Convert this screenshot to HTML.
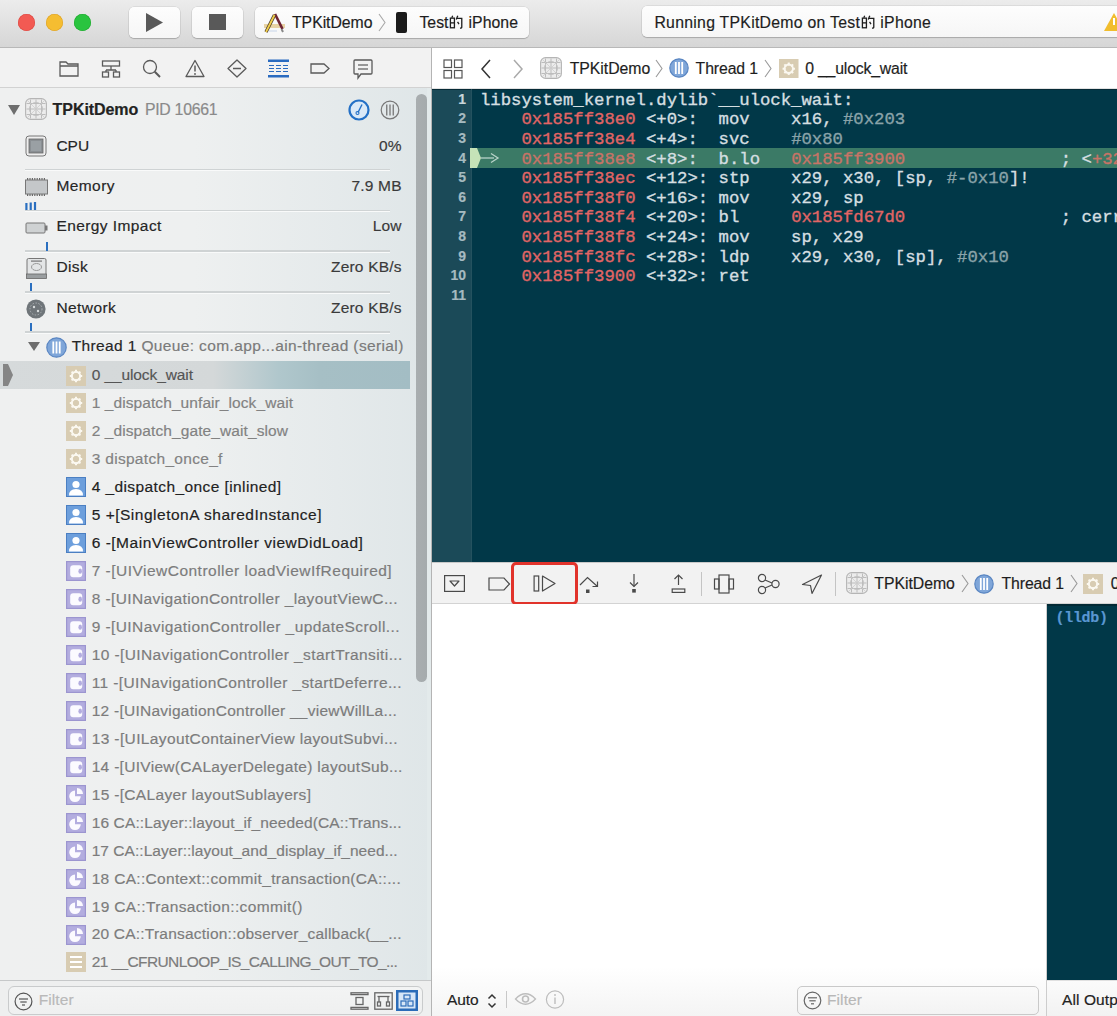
<!DOCTYPE html><html><head><meta charset="utf-8"><style>
*{box-sizing:border-box;margin:0;padding:0}
html,body{width:1117px;height:1016px;overflow:hidden;background:#fff;font-family:"Liberation Sans",sans-serif}
.b{position:absolute}
.t{position:absolute;white-space:nowrap;line-height:1;-webkit-text-stroke:0.18px currentColor}
</style></head><body>
<div class="b" style="left:0px;top:0px;width:1117px;height:48px;background:linear-gradient(#ececec,#d6d6d6);border-bottom:1px solid #b8b8b8"></div>
<div class="b" style="left:17.55px;top:13.5px;width:17.5px;height:17.5px;border-radius:50%;background:#f25a53;box-shadow:inset 0 0 0 0.6px #dc4a43"></div>
<div class="b" style="left:45.85px;top:13.5px;width:17.5px;height:17.5px;border-radius:50%;background:#f5bd31;box-shadow:inset 0 0 0 0.6px #dca22a"></div>
<div class="b" style="left:73.65px;top:13.5px;width:17.5px;height:17.5px;border-radius:50%;background:#2ac43f;box-shadow:inset 0 0 0 0.6px #20a930"></div>
<div class="b" style="left:129px;top:7px;width:51px;height:31px;background:linear-gradient(#fdfdfd,#f6f6f6);border-radius:5px;box-shadow:0 0 0 0.5px rgba(0,0,0,.12),0 1px 1px rgba(0,0,0,.18)"></div>
<svg class="b" style="left:146px;top:13px;" width="17" height="19" viewBox="0 0 17 19"><polygon points="0,0 17,9.5 0,19" fill="#595959"/></svg>
<div class="b" style="left:192px;top:7px;width:51px;height:31px;background:linear-gradient(#fdfdfd,#f6f6f6);border-radius:5px;box-shadow:0 0 0 0.5px rgba(0,0,0,.12),0 1px 1px rgba(0,0,0,.18)"></div>
<div class="b" style="left:209px;top:14px;width:17px;height:16px;background:#595959"></div>
<div class="b" style="left:255px;top:7px;width:274px;height:31px;background:linear-gradient(#fdfdfd,#f6f6f6);border-radius:5px;box-shadow:0 0 0 0.5px rgba(0,0,0,.12),0 1px 1px rgba(0,0,0,.18)"></div>
<svg class="b" style="left:262px;top:11px;" width="24" height="22" viewBox="0 0 24 22"><rect x="2" y="13" width="21" height="4" fill="#e3c98f" opacity="0.8"/><line x1="13" y1="3" x2="20.5" y2="18" stroke="#6d2433" stroke-width="2.6"/><line x1="4" y1="21" x2="12.5" y2="4" stroke="#4a3a2a" stroke-width="3.4"/><line x1="4" y1="21" x2="12.5" y2="4" stroke="#f2cf4a" stroke-width="1.8"/><line x1="19.5" y1="18" x2="21" y2="21" stroke="#888" stroke-width="2"/><rect x="7" y="19" width="8" height="2" fill="#dfe6f0"/></svg>
<div class="t" style="left:292px;top:15.2px;font-size:15.8px;color:#1e1e1e;font-weight:normal;font-family:'Liberation Sans',sans-serif;letter-spacing:-0.03px;">TPKitDemo</div>
<svg class="b" style="left:378px;top:13px;" width="8" height="19" viewBox="0 0 8 19"><polyline points="1,1 7,9.5 1,18" fill="none" stroke="#a8a8a8" stroke-width="1.1"/></svg>
<div class="b" style="left:396px;top:11.5px;width:11px;height:21px;background:#1b1b1b;border-radius:2px"></div>
<div class="t" style="left:419.4px;top:15.2px;font-size:15.8px;color:#1e1e1e;font-weight:normal;font-family:'Liberation Sans',sans-serif;letter-spacing:0.05px;">Test<svg style="display:inline-block;vertical-align:-1px;margin:0 1px 0 0.5px" width="14" height="14" viewBox="0 0 16 16"><g fill="none" stroke="currentColor" stroke-width="1.5"><path d="M4.2,0.8 L3.2,3.2"/><rect x="1.6" y="3.6" width="4.6" height="11"/><path d="M1.6,9 H6.2"/><path d="M10,0.8 L8.3,5.2"/><path d="M9.2,3.8 H14.6 V13.6 Q14.6,15.2 12.6,15"/><path d="M9.8,7.8 L11.4,10.4"/></g></svg> iPhone</div>
<div class="b" style="left:642px;top:6px;width:520px;height:31px;background:linear-gradient(#fdfdfd,#f6f6f6);border-radius:5px;box-shadow:0 0 0 0.5px rgba(0,0,0,.12),0 1px 1px rgba(0,0,0,.18)"></div>
<div class="t" style="left:654.4px;top:15.2px;font-size:15.8px;color:#1e1e1e;font-weight:normal;font-family:'Liberation Sans',sans-serif;letter-spacing:0.28px;">Running TPKitDemo on Test<svg style="display:inline-block;vertical-align:-1px;margin:0 1px 0 0.5px" width="14" height="14" viewBox="0 0 16 16"><g fill="none" stroke="currentColor" stroke-width="1.5"><path d="M4.2,0.8 L3.2,3.2"/><rect x="1.6" y="3.6" width="4.6" height="11"/><path d="M1.6,9 H6.2"/><path d="M10,0.8 L8.3,5.2"/><path d="M9.2,3.8 H14.6 V13.6 Q14.6,15.2 12.6,15"/><path d="M9.8,7.8 L11.4,10.4"/></g></svg> iPhone</div>
<svg class="b" style="left:1104px;top:13px;" width="20" height="18" viewBox="0 0 20 18"><polygon points="10,0 20,18 0,18" fill="#f1bd2d"/><rect x="9" y="5" width="2" height="7" fill="#fff"/></svg>
<div class="b" style="left:0px;top:48px;width:431px;height:968px;background:linear-gradient(90deg,#eff0f0 0%,#eef0f0 45%,#dfe6e8 100%)"></div>
<div class="b" style="left:0px;top:48px;width:431px;height:40px;background:#f2f2f2;border-bottom:1px solid #d2d2d2"></div>
<svg class="b" style="left:59px;top:60px;" width="20" height="17" viewBox="0 0 20 17"><path d="M1,2 h6 l2,2 h10 v12 h-18 z M1,6 h18" fill="none" stroke="#5a5a5a" stroke-width="1.3"/></svg>
<svg class="b" style="left:101px;top:60px;" width="20" height="18" viewBox="0 0 20 18"><rect x="1.5" y="1" width="17" height="5" fill="none" stroke="#5a5a5a" stroke-width="1.3"/><path d="M10,6 v4 M5,10 h10 M5,10 v2 M15,10 v2" fill="none" stroke="#5a5a5a" stroke-width="1.3"/><rect x="1.5" y="12" width="6" height="5" fill="none" stroke="#5a5a5a" stroke-width="1.3"/><rect x="12.5" y="12" width="6" height="5" fill="none" stroke="#5a5a5a" stroke-width="1.3"/></svg>
<svg class="b" style="left:142px;top:59px;" width="20" height="19" viewBox="0 0 20 19"><circle cx="8" cy="8" r="6.5" fill="none" stroke="#5a5a5a" stroke-width="1.3"/><line x1="12.8" y1="12.8" x2="18" y2="18" stroke="#5a5a5a" stroke-width="2"/></svg>
<svg class="b" style="left:185px;top:59px;" width="20" height="19" viewBox="0 0 20 19"><path d="M10,1.5 L19,17.5 H1 Z" fill="none" stroke="#5a5a5a" stroke-width="1.3" stroke-linejoin="round"/><line x1="10" y1="6.5" x2="10" y2="12.5" stroke="#5a5a5a" stroke-width="1.5"/><circle cx="10" cy="15" r="0.9" fill="#5a5a5a"/></svg>
<svg class="b" style="left:227px;top:59px;" width="20" height="19" viewBox="0 0 20 19"><path d="M10,1 L19,9.5 L10,18 L1,9.5 Z" fill="none" stroke="#5a5a5a" stroke-width="1.3" stroke-linejoin="round"/><line x1="6" y1="9.5" x2="14" y2="9.5" stroke="#5a5a5a" stroke-width="1.5"/></svg>
<svg class="b" style="left:267px;top:59px;" width="23" height="19" viewBox="0 0 23 19"><rect x="1" y="0.5" width="21" height="2.5" fill="#2a6bc0"/><rect x="1" y="16" width="21" height="2.5" fill="#2a6bc0"/><g stroke="#2a6bc0" stroke-width="1.2"><line x1="2" y1="6.5" x2="21" y2="6.5" stroke-dasharray="5,2"/><line x1="2" y1="9.5" x2="21" y2="9.5" stroke-dasharray="5,2"/><line x1="2" y1="12.5" x2="21" y2="12.5" stroke-dasharray="5,2"/></g></svg>
<svg class="b" style="left:310px;top:63px;" width="20" height="11" viewBox="0 0 20 11"><path d="M1,1 H14 L19,5.5 L14,10 H1 Z" fill="none" stroke="#5a5a5a" stroke-width="1.3"/></svg>
<svg class="b" style="left:353px;top:59px;" width="20" height="22" viewBox="0 0 20 22"><path d="M2,1 H18 Q19,1 19,2 V14 Q19,15 18,15 H8 L5,19 V15 H2 Q1,15 1,14 V2 Q1,1 2,1 Z" fill="none" stroke="#5a5a5a" stroke-width="1.3"/><line x1="5" y1="6" x2="15" y2="6" stroke="#5a5a5a" stroke-width="1.2"/><line x1="5" y1="10" x2="15" y2="10" stroke="#5a5a5a" stroke-width="1.2"/></svg>
<svg class="b" style="left:8px;top:105px;" width="12" height="10" viewBox="0 0 12 10"><polygon points="0,0 12,0 6,10" fill="#6e6e6e"/></svg>
<svg class="b" style="left:25px;top:98px;" width="22" height="22" viewBox="0 0 22 22"><rect x="0.6" y="0.6" width="20.8" height="20.8" rx="5" fill="#ececec" stroke="#b5b5b5" stroke-width="1.1"/><line x1="5.5" y1="1.5" x2="5.5" y2="20.5" stroke="#bcbcbc" stroke-width="1"/><line x1="1.5" y1="5.5" x2="20.5" y2="5.5" stroke="#bcbcbc" stroke-width="1"/><line x1="11.0" y1="1.5" x2="11.0" y2="20.5" stroke="#bcbcbc" stroke-width="1"/><line x1="1.5" y1="11.0" x2="20.5" y2="11.0" stroke="#bcbcbc" stroke-width="1"/><line x1="16.5" y1="1.5" x2="16.5" y2="20.5" stroke="#bcbcbc" stroke-width="1"/><line x1="1.5" y1="16.5" x2="20.5" y2="16.5" stroke="#bcbcbc" stroke-width="1"/><circle cx="11.0" cy="11.0" r="6.6" fill="none" stroke="#c4c4c4" stroke-width="1"/><line x1="3" y1="3" x2="19" y2="19" stroke="#cdcdcd" stroke-width="0.8"/><line x1="19" y1="3" x2="3" y2="19" stroke="#cdcdcd" stroke-width="0.8"/></svg>
<div class="t" style="left:52.6px;top:101.5px;font-size:16px;color:#222;font-weight:bold;font-family:'Liberation Sans',sans-serif;letter-spacing:-0.07px;">TPKitDemo</div>
<div class="t" style="left:144.9px;top:101.5px;font-size:15.8px;color:#8a8a8a;font-weight:normal;font-family:'Liberation Sans',sans-serif;letter-spacing:-0.25px;">PID 10661</div>
<svg class="b" style="left:348px;top:99px;" width="22" height="22" viewBox="0 0 22 22"><circle cx="11" cy="11" r="9.5" fill="#dbe9f7" stroke="#2470c6" stroke-width="2.2"/><line x1="10" y1="13.5" x2="14" y2="5.5" stroke="#2470c6" stroke-width="1.4"/><circle cx="9.5" cy="14" r="1.5" fill="none" stroke="#2470c6" stroke-width="1.1"/></svg>
<svg class="b" style="left:380px;top:100px;" width="20" height="20" viewBox="0 0 20 20"><circle cx="10" cy="10" r="8.8" fill="none" stroke="#777" stroke-width="1.2"/><g fill="#777"><rect x="6.1" y="4.5" width="1.3" height="11"/><rect x="9.35" y="4.5" width="1.3" height="11"/><rect x="12.6" y="4.5" width="1.3" height="11"/></g></svg>
<div class="t" style="left:56.4px;top:137.5px;font-size:15.5px;color:#262626;font-weight:normal;font-family:'Liberation Sans',sans-serif;letter-spacing:0px;">CPU</div>
<div class="t" style="right:715.5px;top:137.5px;font-size:15.5px;color:#3a3a3a;font-weight:normal;font-family:'Liberation Sans',sans-serif;letter-spacing:0.2px;margin-right:-0.2px">0%</div>
<div class="t" style="left:56.4px;top:177.8px;font-size:15.5px;color:#262626;font-weight:normal;font-family:'Liberation Sans',sans-serif;letter-spacing:0.42px;">Memory</div>
<div class="t" style="right:715.5px;top:177.8px;font-size:15.5px;color:#3a3a3a;font-weight:normal;font-family:'Liberation Sans',sans-serif;letter-spacing:0.2px;margin-right:-0.2px">7.9 MB</div>
<div class="t" style="left:56.4px;top:218.2px;font-size:15.5px;color:#262626;font-weight:normal;font-family:'Liberation Sans',sans-serif;letter-spacing:0.42px;">Energy Impact</div>
<div class="t" style="right:715.5px;top:218.2px;font-size:15.5px;color:#3a3a3a;font-weight:normal;font-family:'Liberation Sans',sans-serif;letter-spacing:0.2px;margin-right:-0.2px">Low</div>
<div class="t" style="left:56.4px;top:259.2px;font-size:15.5px;color:#262626;font-weight:normal;font-family:'Liberation Sans',sans-serif;letter-spacing:0.42px;">Disk</div>
<div class="t" style="right:715.5px;top:259.2px;font-size:15.5px;color:#3a3a3a;font-weight:normal;font-family:'Liberation Sans',sans-serif;letter-spacing:0.2px;margin-right:-0.2px">Zero KB/s</div>
<div class="t" style="left:56.4px;top:299.5px;font-size:15.5px;color:#262626;font-weight:normal;font-family:'Liberation Sans',sans-serif;letter-spacing:0.42px;">Network</div>
<div class="t" style="right:715.5px;top:299.5px;font-size:15.5px;color:#3a3a3a;font-weight:normal;font-family:'Liberation Sans',sans-serif;letter-spacing:0.2px;margin-right:-0.2px">Zero KB/s</div>
<div class="b" style="left:25px;top:168.7px;width:365px;height:1.6px;background:#cfd3d4;box-shadow:0 1px 0 #f9fafa"></div>
<div class="b" style="left:25px;top:209.7px;width:365px;height:1.6px;background:#cfd3d4;box-shadow:0 1px 0 #f9fafa"></div>
<div class="b" style="left:25px;top:250.2px;width:365px;height:1.6px;background:#cfd3d4;box-shadow:0 1px 0 #f9fafa"></div>
<div class="b" style="left:25px;top:291.0px;width:365px;height:1.6px;background:#cfd3d4;box-shadow:0 1px 0 #f9fafa"></div>
<div class="b" style="left:25px;top:331.2px;width:365px;height:1.6px;background:#cfd3d4;box-shadow:0 1px 0 #f9fafa"></div>
<svg class="b" style="left:25px;top:135px;" width="22" height="22" viewBox="0 0 22 22"><rect x="1" y="1" width="20" height="20" rx="3" fill="#eee" stroke="#777" stroke-width="1"/><rect x="4" y="4" width="14" height="14" fill="#8a8f93" stroke="#666" stroke-width="0.8"/><rect x="6" y="6" width="10" height="10" fill="#9aa0a4"/></svg>
<svg class="b" style="left:25px;top:178px;" width="23" height="18" viewBox="0 0 23 18"><rect x="2.0" y="0" width="1.2" height="2" fill="#666"/><rect x="2.0" y="16" width="1.2" height="2" fill="#666"/><rect x="4.4" y="0" width="1.2" height="2" fill="#666"/><rect x="4.4" y="16" width="1.2" height="2" fill="#666"/><rect x="6.8" y="0" width="1.2" height="2" fill="#666"/><rect x="6.8" y="16" width="1.2" height="2" fill="#666"/><rect x="9.2" y="0" width="1.2" height="2" fill="#666"/><rect x="9.2" y="16" width="1.2" height="2" fill="#666"/><rect x="11.6" y="0" width="1.2" height="2" fill="#666"/><rect x="11.6" y="16" width="1.2" height="2" fill="#666"/><rect x="14.0" y="0" width="1.2" height="2" fill="#666"/><rect x="14.0" y="16" width="1.2" height="2" fill="#666"/><rect x="16.4" y="0" width="1.2" height="2" fill="#666"/><rect x="16.4" y="16" width="1.2" height="2" fill="#666"/><rect x="18.8" y="0" width="1.2" height="2" fill="#666"/><rect x="18.8" y="16" width="1.2" height="2" fill="#666"/><rect x="0.5" y="2" width="22" height="14" fill="#c4c7c9" stroke="#777" stroke-width="1"/></svg>
<svg class="b" style="left:25px;top:201px;" width="12" height="9" viewBox="0 0 12 9"><rect x="0.3" y="2" width="2.2" height="7" fill="#2a6fc0"/><rect x="4.6" y="1.5" width="2.2" height="7.5" fill="#2a6fc0"/><rect x="8.9" y="1" width="2.2" height="8" fill="#2a6fc0"/></svg>
<svg class="b" style="left:25px;top:222px;" width="23" height="12" viewBox="0 0 23 12"><rect x="1" y="1" width="19" height="10" rx="1" fill="#cfd2d3" stroke="#777" stroke-width="1"/><rect x="20" y="3.5" width="2.5" height="5" fill="#777"/></svg>
<div class="b" style="left:46px;top:242px;width:2.4px;height:8.5px;background:#2a6fc0"></div>
<svg class="b" style="left:26px;top:258px;" width="21" height="21" viewBox="0 0 21 21"><rect x="1" y="0.5" width="19" height="17" rx="1.5" fill="#e3e5e6" stroke="#777" stroke-width="1"/><rect x="0.5" y="16" width="20" height="4.5" fill="#9a9ea0" stroke="#666" stroke-width="0.8"/><ellipse cx="10.5" cy="9" rx="5" ry="3.5" fill="none" stroke="#999" stroke-width="1"/><rect x="5" y="2.5" width="11" height="1.2" fill="#777"/></svg>
<div class="b" style="left:29.5px;top:282.6px;width:2.5px;height:8.2px;background:#2a6fc0"></div>
<svg class="b" style="left:26px;top:299px;" width="20" height="20" viewBox="0 0 20 20"><circle cx="10" cy="10" r="9.6" fill="#6f7579"/><circle cx="10" cy="10" r="6" fill="none" stroke="#b8bdbf" stroke-width="0.8" stroke-dasharray="1.5,1.5"/><circle cx="8" cy="8" r="1.2" fill="#d8dcdd"/><circle cx="12" cy="12" r="1.2" fill="#d8dcdd"/></svg>
<div class="b" style="left:29.5px;top:323.3px;width:2.5px;height:8.2px;background:#2a6fc0"></div>
<svg class="b" style="left:28px;top:342px;" width="12" height="9" viewBox="0 0 12 9"><polygon points="0,0 12,0 6,9" fill="#6e6e6e"/></svg>
<svg class="b" style="left:46px;top:337px;" width="21" height="21" viewBox="0 0 21 21"><circle cx="10.5" cy="10.5" r="9.7" fill="#7fa6d9" stroke="#5a86c2" stroke-width="1.2"/><rect x="6.4" y="4.5" width="1.8" height="12" fill="#fff"/><rect x="9.6" y="4.5" width="1.8" height="12" fill="#fff"/><rect x="12.8" y="4.5" width="1.8" height="12" fill="#fff"/></svg>
<div class="t" style="left:71.7px;top:338.2px;font-size:15.5px;color:#262626;font-weight:normal;font-family:'Liberation Sans',sans-serif;letter-spacing:0.37px;">Thread 1 <span style="color:#7a7a7a">Queue: com.app...ain-thread (serial)</span></div>
<div class="b" style="left:0px;top:361px;width:410px;height:28px;background:linear-gradient(90deg,#d6dadb 0%,#d4d8d9 52%,#b0c7cc 68%,#a6bfc5 78%,#a3bdc4 100%)"></div>
<svg class="b" style="left:3px;top:364px;" width="10" height="22" viewBox="0 0 10 22"><polygon points="0,0 5,0 10,11 5,22 0,22" fill="#858585"/></svg>
<svg class="b" style="left:66px;top:365.5px;" width="20" height="20" viewBox="0 0 20 20"><rect x="0" y="0" width="20" height="20" fill="#d8ccb2"/><line x1="13.20" y1="10.00" x2="16.20" y2="10.00" stroke="#fbf8f0" stroke-width="2"/><line x1="12.26" y1="12.26" x2="14.38" y2="14.38" stroke="#fbf8f0" stroke-width="2"/><line x1="10.00" y1="13.20" x2="10.00" y2="16.20" stroke="#fbf8f0" stroke-width="2"/><line x1="7.74" y1="12.26" x2="5.62" y2="14.38" stroke="#fbf8f0" stroke-width="2"/><line x1="6.80" y1="10.00" x2="3.80" y2="10.00" stroke="#fbf8f0" stroke-width="2"/><line x1="7.74" y1="7.74" x2="5.62" y2="5.62" stroke="#fbf8f0" stroke-width="2"/><line x1="10.00" y1="6.80" x2="10.00" y2="3.80" stroke="#fbf8f0" stroke-width="2"/><line x1="12.26" y1="7.74" x2="14.38" y2="5.62" stroke="#fbf8f0" stroke-width="2"/><circle cx="10.0" cy="10.0" r="4.2" fill="none" stroke="#fbf8f0" stroke-width="1.9"/></svg>
<div class="t" style="left:91.7px;top:366.8px;font-size:15.5px;color:#555;font-weight:normal;font-family:'Liberation Sans',sans-serif;letter-spacing:-0.096px;">0 __ulock_wait</div>
<svg class="b" style="left:66px;top:393.45px;" width="20" height="20" viewBox="0 0 20 20"><rect x="0" y="0" width="20" height="20" fill="#d8ccb2"/><line x1="13.20" y1="10.00" x2="16.20" y2="10.00" stroke="#fbf8f0" stroke-width="2"/><line x1="12.26" y1="12.26" x2="14.38" y2="14.38" stroke="#fbf8f0" stroke-width="2"/><line x1="10.00" y1="13.20" x2="10.00" y2="16.20" stroke="#fbf8f0" stroke-width="2"/><line x1="7.74" y1="12.26" x2="5.62" y2="14.38" stroke="#fbf8f0" stroke-width="2"/><line x1="6.80" y1="10.00" x2="3.80" y2="10.00" stroke="#fbf8f0" stroke-width="2"/><line x1="7.74" y1="7.74" x2="5.62" y2="5.62" stroke="#fbf8f0" stroke-width="2"/><line x1="10.00" y1="6.80" x2="10.00" y2="3.80" stroke="#fbf8f0" stroke-width="2"/><line x1="12.26" y1="7.74" x2="14.38" y2="5.62" stroke="#fbf8f0" stroke-width="2"/><circle cx="10.0" cy="10.0" r="4.2" fill="none" stroke="#fbf8f0" stroke-width="1.9"/></svg>
<div class="t" style="left:91.7px;top:394.8px;font-size:15.5px;color:#828282;font-weight:normal;font-family:'Liberation Sans',sans-serif;letter-spacing:0.083px;">1 _dispatch_unfair_lock_wait</div>
<svg class="b" style="left:66px;top:421.4px;" width="20" height="20" viewBox="0 0 20 20"><rect x="0" y="0" width="20" height="20" fill="#d8ccb2"/><line x1="13.20" y1="10.00" x2="16.20" y2="10.00" stroke="#fbf8f0" stroke-width="2"/><line x1="12.26" y1="12.26" x2="14.38" y2="14.38" stroke="#fbf8f0" stroke-width="2"/><line x1="10.00" y1="13.20" x2="10.00" y2="16.20" stroke="#fbf8f0" stroke-width="2"/><line x1="7.74" y1="12.26" x2="5.62" y2="14.38" stroke="#fbf8f0" stroke-width="2"/><line x1="6.80" y1="10.00" x2="3.80" y2="10.00" stroke="#fbf8f0" stroke-width="2"/><line x1="7.74" y1="7.74" x2="5.62" y2="5.62" stroke="#fbf8f0" stroke-width="2"/><line x1="10.00" y1="6.80" x2="10.00" y2="3.80" stroke="#fbf8f0" stroke-width="2"/><line x1="12.26" y1="7.74" x2="14.38" y2="5.62" stroke="#fbf8f0" stroke-width="2"/><circle cx="10.0" cy="10.0" r="4.2" fill="none" stroke="#fbf8f0" stroke-width="1.9"/></svg>
<div class="t" style="left:91.7px;top:422.8px;font-size:15.5px;color:#828282;font-weight:normal;font-family:'Liberation Sans',sans-serif;letter-spacing:0.096px;">2 _dispatch_gate_wait_slow</div>
<svg class="b" style="left:66px;top:449.35px;" width="20" height="20" viewBox="0 0 20 20"><rect x="0" y="0" width="20" height="20" fill="#d8ccb2"/><line x1="13.20" y1="10.00" x2="16.20" y2="10.00" stroke="#fbf8f0" stroke-width="2"/><line x1="12.26" y1="12.26" x2="14.38" y2="14.38" stroke="#fbf8f0" stroke-width="2"/><line x1="10.00" y1="13.20" x2="10.00" y2="16.20" stroke="#fbf8f0" stroke-width="2"/><line x1="7.74" y1="12.26" x2="5.62" y2="14.38" stroke="#fbf8f0" stroke-width="2"/><line x1="6.80" y1="10.00" x2="3.80" y2="10.00" stroke="#fbf8f0" stroke-width="2"/><line x1="7.74" y1="7.74" x2="5.62" y2="5.62" stroke="#fbf8f0" stroke-width="2"/><line x1="10.00" y1="6.80" x2="10.00" y2="3.80" stroke="#fbf8f0" stroke-width="2"/><line x1="12.26" y1="7.74" x2="14.38" y2="5.62" stroke="#fbf8f0" stroke-width="2"/><circle cx="10.0" cy="10.0" r="4.2" fill="none" stroke="#fbf8f0" stroke-width="1.9"/></svg>
<div class="t" style="left:91.7px;top:450.8px;font-size:15.5px;color:#828282;font-weight:normal;font-family:'Liberation Sans',sans-serif;letter-spacing:0.304px;">3 dispatch_once_f</div>
<svg class="b" style="left:66px;top:477.3px;" width="20" height="20" viewBox="0 0 20 20"><rect x="0.5" y="0.5" width="19" height="19" fill="#6d9fdc" stroke="#4b7fc2"/><circle cx="10" cy="7.5" r="3.6" fill="#fff"/><path d="M3,18.5 Q3,12 10,12 Q17,12 17,18.5 Z" fill="#fff"/></svg>
<div class="t" style="left:91.7px;top:478.8px;font-size:15.5px;color:#222;font-weight:normal;font-family:'Liberation Sans',sans-serif;letter-spacing:0.41px;">4 _dispatch_once [inlined]</div>
<svg class="b" style="left:66px;top:505.25px;" width="20" height="20" viewBox="0 0 20 20"><rect x="0.5" y="0.5" width="19" height="19" fill="#6d9fdc" stroke="#4b7fc2"/><circle cx="10" cy="7.5" r="3.6" fill="#fff"/><path d="M3,18.5 Q3,12 10,12 Q17,12 17,18.5 Z" fill="#fff"/></svg>
<div class="t" style="left:91.7px;top:506.7px;font-size:15.5px;color:#222;font-weight:normal;font-family:'Liberation Sans',sans-serif;letter-spacing:0.51px;">5 +[SingletonA sharedInstance]</div>
<svg class="b" style="left:66px;top:533.2px;" width="20" height="20" viewBox="0 0 20 20"><rect x="0.5" y="0.5" width="19" height="19" fill="#6d9fdc" stroke="#4b7fc2"/><circle cx="10" cy="7.5" r="3.6" fill="#fff"/><path d="M3,18.5 Q3,12 10,12 Q17,12 17,18.5 Z" fill="#fff"/></svg>
<div class="t" style="left:91.7px;top:534.7px;font-size:15.5px;color:#222;font-weight:normal;font-family:'Liberation Sans',sans-serif;letter-spacing:0.51px;">6 -[MainViewController viewDidLoad]</div>
<svg class="b" style="left:66px;top:561.15px;" width="20" height="20" viewBox="0 0 20 20"><rect x="0.6" y="0.6" width="18.8" height="18.8" fill="#b3addf" stroke="#9c95d0" stroke-width="1.2"/><rect x="4.2" y="4.2" width="12" height="12" rx="3" fill="#fbfaff"/><ellipse cx="14.2" cy="10.2" rx="1.8" ry="2.6" fill="#b3addf"/></svg>
<div class="t" style="left:91.7px;top:562.7px;font-size:15.5px;color:#7c7c7c;font-weight:normal;font-family:'Liberation Sans',sans-serif;letter-spacing:0.483px;">7 -[UIViewController loadViewIfRequired]</div>
<svg class="b" style="left:66px;top:589.1px;" width="20" height="20" viewBox="0 0 20 20"><rect x="0.6" y="0.6" width="18.8" height="18.8" fill="#b3addf" stroke="#9c95d0" stroke-width="1.2"/><rect x="4.2" y="4.2" width="12" height="12" rx="3" fill="#fbfaff"/><ellipse cx="14.2" cy="10.2" rx="1.8" ry="2.6" fill="#b3addf"/></svg>
<div class="t" style="left:91.7px;top:590.7px;font-size:15.5px;color:#7c7c7c;font-weight:normal;font-family:'Liberation Sans',sans-serif;letter-spacing:0.387px;">8 -[UINavigationController _layoutViewC...</div>
<svg class="b" style="left:66px;top:617.05px;" width="20" height="20" viewBox="0 0 20 20"><rect x="0.6" y="0.6" width="18.8" height="18.8" fill="#b3addf" stroke="#9c95d0" stroke-width="1.2"/><rect x="4.2" y="4.2" width="12" height="12" rx="3" fill="#fbfaff"/><ellipse cx="14.2" cy="10.2" rx="1.8" ry="2.6" fill="#b3addf"/></svg>
<div class="t" style="left:91.7px;top:618.7px;font-size:15.5px;color:#7c7c7c;font-weight:normal;font-family:'Liberation Sans',sans-serif;letter-spacing:0.418px;">9 -[UINavigationController _updateScroll...</div>
<svg class="b" style="left:66px;top:645.0px;" width="20" height="20" viewBox="0 0 20 20"><rect x="0.6" y="0.6" width="18.8" height="18.8" fill="#b3addf" stroke="#9c95d0" stroke-width="1.2"/><rect x="4.2" y="4.2" width="12" height="12" rx="3" fill="#fbfaff"/><ellipse cx="14.2" cy="10.2" rx="1.8" ry="2.6" fill="#b3addf"/></svg>
<div class="t" style="left:91.7px;top:646.6px;font-size:15.5px;color:#7c7c7c;font-weight:normal;font-family:'Liberation Sans',sans-serif;letter-spacing:0.398px;">10 -[UINavigationController _startTransiti...</div>
<svg class="b" style="left:66px;top:672.95px;" width="20" height="20" viewBox="0 0 20 20"><rect x="0.6" y="0.6" width="18.8" height="18.8" fill="#b3addf" stroke="#9c95d0" stroke-width="1.2"/><rect x="4.2" y="4.2" width="12" height="12" rx="3" fill="#fbfaff"/><ellipse cx="14.2" cy="10.2" rx="1.8" ry="2.6" fill="#b3addf"/></svg>
<div class="t" style="left:91.7px;top:674.6px;font-size:15.5px;color:#7c7c7c;font-weight:normal;font-family:'Liberation Sans',sans-serif;letter-spacing:0.382px;">11 -[UINavigationController _startDeferre...</div>
<svg class="b" style="left:66px;top:700.9px;" width="20" height="20" viewBox="0 0 20 20"><rect x="0.6" y="0.6" width="18.8" height="18.8" fill="#b3addf" stroke="#9c95d0" stroke-width="1.2"/><rect x="4.2" y="4.2" width="12" height="12" rx="3" fill="#fbfaff"/><ellipse cx="14.2" cy="10.2" rx="1.8" ry="2.6" fill="#b3addf"/></svg>
<div class="t" style="left:91.7px;top:702.6px;font-size:15.5px;color:#7c7c7c;font-weight:normal;font-family:'Liberation Sans',sans-serif;letter-spacing:0.252px;">12 -[UINavigationController __viewWillLa...</div>
<svg class="b" style="left:66px;top:728.8499999999999px;" width="20" height="20" viewBox="0 0 20 20"><rect x="0.6" y="0.6" width="18.8" height="18.8" fill="#b3addf" stroke="#9c95d0" stroke-width="1.2"/><rect x="4.2" y="4.2" width="12" height="12" rx="3" fill="#fbfaff"/><ellipse cx="14.2" cy="10.2" rx="1.8" ry="2.6" fill="#b3addf"/></svg>
<div class="t" style="left:91.7px;top:730.6px;font-size:15.5px;color:#7c7c7c;font-weight:normal;font-family:'Liberation Sans',sans-serif;letter-spacing:0.374px;">13 -[UILayoutContainerView layoutSubvi...</div>
<svg class="b" style="left:66px;top:756.8px;" width="20" height="20" viewBox="0 0 20 20"><rect x="0.6" y="0.6" width="18.8" height="18.8" fill="#b3addf" stroke="#9c95d0" stroke-width="1.2"/><rect x="4.2" y="4.2" width="12" height="12" rx="3" fill="#fbfaff"/><ellipse cx="14.2" cy="10.2" rx="1.8" ry="2.6" fill="#b3addf"/></svg>
<div class="t" style="left:91.7px;top:758.6px;font-size:15.5px;color:#7c7c7c;font-weight:normal;font-family:'Liberation Sans',sans-serif;letter-spacing:0.301px;">14 -[UIView(CALayerDelegate) layoutSub...</div>
<svg class="b" style="left:66px;top:784.75px;" width="20" height="20" viewBox="0 0 20 20"><rect x="0.6" y="0.6" width="18.8" height="18.8" fill="#b3addf" stroke="#9c95d0" stroke-width="1.2"/><path d="M9,5.5 A5.8,5.8 0 1 0 14.8,11.3 H9 Z" fill="#fbfaff"/><path d="M11,3 A6,6 0 0 1 17,9 H11 Z" fill="#fbfaff"/></svg>
<div class="t" style="left:91.7px;top:786.5px;font-size:15.5px;color:#7c7c7c;font-weight:normal;font-family:'Liberation Sans',sans-serif;letter-spacing:0.324px;">15 -[CALayer layoutSublayers]</div>
<svg class="b" style="left:66px;top:812.7px;" width="20" height="20" viewBox="0 0 20 20"><rect x="0.6" y="0.6" width="18.8" height="18.8" fill="#b3addf" stroke="#9c95d0" stroke-width="1.2"/><path d="M9,5.5 A5.8,5.8 0 1 0 14.8,11.3 H9 Z" fill="#fbfaff"/><path d="M11,3 A6,6 0 0 1 17,9 H11 Z" fill="#fbfaff"/></svg>
<div class="t" style="left:91.7px;top:814.5px;font-size:15.5px;color:#7c7c7c;font-weight:normal;font-family:'Liberation Sans',sans-serif;letter-spacing:0.13px;">16 CA::Layer::layout_if_needed(CA::Trans...</div>
<svg class="b" style="left:66px;top:840.65px;" width="20" height="20" viewBox="0 0 20 20"><rect x="0.6" y="0.6" width="18.8" height="18.8" fill="#b3addf" stroke="#9c95d0" stroke-width="1.2"/><path d="M9,5.5 A5.8,5.8 0 1 0 14.8,11.3 H9 Z" fill="#fbfaff"/><path d="M11,3 A6,6 0 0 1 17,9 H11 Z" fill="#fbfaff"/></svg>
<div class="t" style="left:91.7px;top:842.5px;font-size:15.5px;color:#7c7c7c;font-weight:normal;font-family:'Liberation Sans',sans-serif;letter-spacing:0.041px;">17 CA::Layer::layout_and_display_if_need...</div>
<svg class="b" style="left:66px;top:868.5999999999999px;" width="20" height="20" viewBox="0 0 20 20"><rect x="0.6" y="0.6" width="18.8" height="18.8" fill="#b3addf" stroke="#9c95d0" stroke-width="1.2"/><path d="M9,5.5 A5.8,5.8 0 1 0 14.8,11.3 H9 Z" fill="#fbfaff"/><path d="M11,3 A6,6 0 0 1 17,9 H11 Z" fill="#fbfaff"/></svg>
<div class="t" style="left:91.7px;top:870.5px;font-size:15.5px;color:#7c7c7c;font-weight:normal;font-family:'Liberation Sans',sans-serif;letter-spacing:0.311px;">18 CA::Context::commit_transaction(CA::...</div>
<svg class="b" style="left:66px;top:896.55px;" width="20" height="20" viewBox="0 0 20 20"><rect x="0.6" y="0.6" width="18.8" height="18.8" fill="#b3addf" stroke="#9c95d0" stroke-width="1.2"/><path d="M9,5.5 A5.8,5.8 0 1 0 14.8,11.3 H9 Z" fill="#fbfaff"/><path d="M11,3 A6,6 0 0 1 17,9 H11 Z" fill="#fbfaff"/></svg>
<div class="t" style="left:91.7px;top:898.5px;font-size:15.5px;color:#7c7c7c;font-weight:normal;font-family:'Liberation Sans',sans-serif;letter-spacing:0.36px;">19 CA::Transaction::commit()</div>
<svg class="b" style="left:66px;top:924.5px;" width="20" height="20" viewBox="0 0 20 20"><rect x="0.6" y="0.6" width="18.8" height="18.8" fill="#b3addf" stroke="#9c95d0" stroke-width="1.2"/><path d="M9,5.5 A5.8,5.8 0 1 0 14.8,11.3 H9 Z" fill="#fbfaff"/><path d="M11,3 A6,6 0 0 1 17,9 H11 Z" fill="#fbfaff"/></svg>
<div class="t" style="left:91.7px;top:926.4px;font-size:15.5px;color:#7c7c7c;font-weight:normal;font-family:'Liberation Sans',sans-serif;letter-spacing:0.213px;">20 CA::Transaction::observer_callback(__...</div>
<svg class="b" style="left:66px;top:952.4499999999999px;" width="20" height="20" viewBox="0 0 20 20"><rect x="0" y="0" width="20" height="20" fill="#d8ccb2"/><g fill="#fff"><rect x="4" y="4" width="12" height="2"/><rect x="4" y="9" width="12" height="2"/><rect x="4" y="14" width="12" height="2"/></g></svg>
<div class="t" style="left:91.7px;top:954.4px;font-size:15.5px;color:#7c7c7c;font-weight:normal;font-family:'Liberation Sans',sans-serif;letter-spacing:-0.6px;">21 __CFRUNLOOP_IS_CALLING_OUT_TO_...</div>
<div class="b" style="left:416px;top:94px;width:11px;height:587.5px;background:linear-gradient(90deg,#a9aeb0,#a5abad);border-radius:5.5px"></div>
<div class="b" style="left:427px;top:88px;width:4px;height:892px;background:#e3eaeb"></div>
<div class="b" style="left:0px;top:979.5px;width:431px;height:36.5px;background:#eeefef;border-top:1.2px solid #c6c8c9"></div>
<div class="b" style="left:7.5px;top:985.8px;width:415.5px;height:29.5px;background:linear-gradient(#f3f4f4,#eff0f0);border:1.2px solid #c9cbcc;border-radius:6px"></div>
<svg class="b" style="left:13.5px;top:991.5px;" width="19" height="19" viewBox="0 0 19 19"><circle cx="9.5" cy="9.5" r="8.4" fill="none" stroke="#555" stroke-width="1.2"/><line x1="5" y1="7" x2="14" y2="7" stroke="#555" stroke-width="1.2"/><line x1="6.3" y1="10" x2="12.7" y2="10" stroke="#555" stroke-width="1.2"/><line x1="8" y1="13" x2="11" y2="13" stroke="#555" stroke-width="1.2"/></svg>
<div class="t" style="left:38.7px;top:992.3px;font-size:15.5px;color:#b9b9b9;font-weight:normal;font-family:'Liberation Sans',sans-serif;letter-spacing:0.1px;">Filter</div>
<svg class="b" style="left:349.5px;top:991.5px;" width="19" height="18" viewBox="0 0 19 18"><g fill="none" stroke="#666" stroke-width="1.3"><rect x="1" y="0.8" width="17" height="1.8"/><rect x="1" y="15.4" width="17" height="1.8"/><rect x="6" y="5.5" width="7" height="7"/></g></svg>
<svg class="b" style="left:373.5px;top:991.5px;" width="19" height="18" viewBox="0 0 19 18"><g fill="none" stroke="#666" stroke-width="1.3"><rect x="0.8" y="0.8" width="17.4" height="16.4"/><line x1="3.5" y1="4.5" x2="15.5" y2="4.5"/><line x1="5" y1="4.5" x2="5" y2="10"/><line x1="14" y1="4.5" x2="14" y2="10"/><rect x="3.5" y="10" width="3" height="4"/><rect x="12.5" y="10" width="3" height="4"/></g></svg>
<svg class="b" style="left:395.5px;top:989.5px;" width="22" height="21" viewBox="0 0 22 21"><rect x="0" y="0" width="22" height="21" fill="#2b6cb8"/><rect x="2.5" y="2.5" width="17" height="16" fill="#d6e6f7"/><g fill="none" stroke="#2b6cb8" stroke-width="1.2"><rect x="8" y="5" width="6" height="4"/><rect x="5" y="11" width="5" height="5"/><rect x="12" y="11" width="5" height="5"/></g></svg>
<div class="b" style="left:431px;top:48px;width:1px;height:968px;background:#b4b4b4"></div>
<div class="b" style="left:432px;top:48px;width:685px;height:41px;background:#fff;border-bottom:1px solid #e2e2e2"></div>
<svg class="b" style="left:443px;top:59px;" width="20" height="20" viewBox="0 0 20 20"><rect x="1" y="1" width="7.5" height="7.5" fill="none" stroke="#555" stroke-width="1.2"/><rect x="11.5" y="1" width="7.5" height="7.5" fill="none" stroke="#555" stroke-width="1.2"/><rect x="1" y="11.5" width="7.5" height="7.5" fill="none" stroke="#555" stroke-width="1.2"/><rect x="11.5" y="11.5" width="7.5" height="7.5" fill="none" stroke="#555" stroke-width="1.2"/></svg>
<svg class="b" style="left:480px;top:59px;" width="12" height="20" viewBox="0 0 12 20"><polyline points="10,1 2,10 10,19" fill="none" stroke="#333" stroke-width="1.5"/></svg>
<svg class="b" style="left:512px;top:59px;" width="12" height="20" viewBox="0 0 12 20"><polyline points="2,1 10,10 2,19" fill="none" stroke="#aaa" stroke-width="1.5"/></svg>
<svg class="b" style="left:540px;top:57px;" width="22" height="22" viewBox="0 0 22 22"><rect x="0.6" y="0.6" width="20.8" height="20.8" rx="5" fill="#ececec" stroke="#b5b5b5" stroke-width="1.1"/><line x1="5.5" y1="1.5" x2="5.5" y2="20.5" stroke="#bcbcbc" stroke-width="1"/><line x1="1.5" y1="5.5" x2="20.5" y2="5.5" stroke="#bcbcbc" stroke-width="1"/><line x1="11.0" y1="1.5" x2="11.0" y2="20.5" stroke="#bcbcbc" stroke-width="1"/><line x1="1.5" y1="11.0" x2="20.5" y2="11.0" stroke="#bcbcbc" stroke-width="1"/><line x1="16.5" y1="1.5" x2="16.5" y2="20.5" stroke="#bcbcbc" stroke-width="1"/><line x1="1.5" y1="16.5" x2="20.5" y2="16.5" stroke="#bcbcbc" stroke-width="1"/><circle cx="11.0" cy="11.0" r="6.6" fill="none" stroke="#c4c4c4" stroke-width="1"/><line x1="3" y1="3" x2="19" y2="19" stroke="#cdcdcd" stroke-width="0.8"/><line x1="19" y1="3" x2="3" y2="19" stroke="#cdcdcd" stroke-width="0.8"/></svg>
<div class="t" style="left:569.7px;top:61.4px;font-size:15.8px;color:#1e1e1e;font-weight:normal;font-family:'Liberation Sans',sans-serif;letter-spacing:-0.03px;">TPKitDemo</div>
<svg class="b" style="left:655px;top:59px;" width="8" height="19" viewBox="0 0 8 19"><polyline points="1,1 7,9.5 1,18" fill="none" stroke="#9a9a9a" stroke-width="1.1"/></svg>
<svg class="b" style="left:669px;top:58px;" width="20" height="20" viewBox="0 0 20 20"><circle cx="10.0" cy="10.0" r="9.2" fill="#7fa6d9" stroke="#5a86c2" stroke-width="1.2"/><rect x="5.9" y="4.0" width="1.8" height="12" fill="#fff"/><rect x="9.1" y="4.0" width="1.8" height="12" fill="#fff"/><rect x="12.3" y="4.0" width="1.8" height="12" fill="#fff"/></svg>
<div class="t" style="left:695.6px;top:61.4px;font-size:15.8px;color:#1e1e1e;font-weight:normal;font-family:'Liberation Sans',sans-serif;letter-spacing:-0.1px;">Thread 1</div>
<svg class="b" style="left:764px;top:59px;" width="8" height="19" viewBox="0 0 8 19"><polyline points="1,1 7,9.5 1,18" fill="none" stroke="#9a9a9a" stroke-width="1.1"/></svg>
<svg class="b" style="left:779px;top:58.5px;" width="19.5" height="19.5" viewBox="0 0 19.5 19.5"><rect x="0" y="0" width="19.5" height="19.5" fill="#d8ccb2"/><line x1="12.95" y1="9.75" x2="15.95" y2="9.75" stroke="#fbf8f0" stroke-width="2"/><line x1="12.01" y1="12.01" x2="14.13" y2="14.13" stroke="#fbf8f0" stroke-width="2"/><line x1="9.75" y1="12.95" x2="9.75" y2="15.95" stroke="#fbf8f0" stroke-width="2"/><line x1="7.49" y1="12.01" x2="5.37" y2="14.13" stroke="#fbf8f0" stroke-width="2"/><line x1="6.55" y1="9.75" x2="3.55" y2="9.75" stroke="#fbf8f0" stroke-width="2"/><line x1="7.49" y1="7.49" x2="5.37" y2="5.37" stroke="#fbf8f0" stroke-width="2"/><line x1="9.75" y1="6.55" x2="9.75" y2="3.55" stroke="#fbf8f0" stroke-width="2"/><line x1="12.01" y1="7.49" x2="14.13" y2="5.37" stroke="#fbf8f0" stroke-width="2"/><circle cx="9.75" cy="9.75" r="4.2" fill="none" stroke="#fbf8f0" stroke-width="1.9"/></svg>
<div class="t" style="left:805.2px;top:61.4px;font-size:15.8px;color:#1e1e1e;font-weight:normal;font-family:'Liberation Sans',sans-serif;letter-spacing:-0.18px;">0 __ulock_wait</div>
<div class="b" style="left:432px;top:89px;width:685px;height:473px;background:#013848"></div>
<div class="b" style="left:432px;top:89px;width:40px;height:473px;background:#1b4a58"></div>
<div class="b" style="left:432px;top:88.5px;width:685px;height:1.5px;background:#062a36"></div>
<div class="b" style="left:470.8px;top:89px;width:1.2px;height:473px;background:#24525f"></div>
<div class="b" style="left:472px;top:148px;width:645px;height:20px;background:#3b7a66"></div>
<svg class="b" style="left:470px;top:148px;" width="12" height="20" viewBox="0 0 12 20"><polygon points="0,0 7,0 11,10 7,20 0,20" fill="#c5e3b8"/></svg>
<div class="t" style="right:651px;top:91.8px;font-size:14px;color:#c9d6da;font-weight:bold;font-family:'Liberation Sans',sans-serif;letter-spacing:0px;">1</div>
<div class="t" style="left:480px;top:91.8px;font-size:17.3px;color:#d5dfe1;font-weight:normal;font-family:'Liberation Mono',monospace;letter-spacing:0px;white-space:pre;-webkit-text-stroke:0.35px currentColor">libsystem_kernel.dylib`__ulock_wait:</div>
<div class="t" style="right:651px;top:111.4px;font-size:14px;color:#a6bac0;font-weight:bold;font-family:'Liberation Sans',sans-serif;letter-spacing:0px;">2</div>
<div class="t" style="left:480px;top:111.4px;font-size:17.3px;color:#d5dfe1;font-weight:normal;font-family:'Liberation Mono',monospace;letter-spacing:0px;white-space:pre;-webkit-text-stroke:0.35px currentColor">    <span style="color:#e26565">0x185ff38e0</span> &lt;+0&gt;:  mov    x16, <span style="color:#8aa3a9">#0x203</span></div>
<div class="t" style="right:651px;top:131.0px;font-size:14px;color:#a6bac0;font-weight:bold;font-family:'Liberation Sans',sans-serif;letter-spacing:0px;">3</div>
<div class="t" style="left:480px;top:131.0px;font-size:17.3px;color:#d5dfe1;font-weight:normal;font-family:'Liberation Mono',monospace;letter-spacing:0px;white-space:pre;-webkit-text-stroke:0.35px currentColor">    <span style="color:#e26565">0x185ff38e4</span> &lt;+4&gt;:  svc    <span style="color:#8aa3a9">#0x80</span></div>
<div class="t" style="right:651px;top:150.6px;font-size:14px;color:#a6bac0;font-weight:bold;font-family:'Liberation Sans',sans-serif;letter-spacing:0px;">4</div>
<div class="t" style="left:480px;top:150.6px;font-size:17.3px;color:#d5dfe1;font-weight:normal;font-family:'Liberation Mono',monospace;letter-spacing:0px;white-space:pre;-webkit-text-stroke:0.35px currentColor">    <span style="color:#c77466">0x185ff38e8</span> &lt;+8&gt;:  b.lo   <span style="color:#c77466">0x185ff3900</span>               ; &lt;<span style="color:#c77466">+32</span>&gt;</div>
<div class="t" style="right:651px;top:170.2px;font-size:14px;color:#a6bac0;font-weight:bold;font-family:'Liberation Sans',sans-serif;letter-spacing:0px;">5</div>
<div class="t" style="left:480px;top:170.2px;font-size:17.3px;color:#d5dfe1;font-weight:normal;font-family:'Liberation Mono',monospace;letter-spacing:0px;white-space:pre;-webkit-text-stroke:0.35px currentColor">    <span style="color:#e26565">0x185ff38ec</span> &lt;+12&gt;: stp    x29, x30, [sp, <span style="color:#8aa3a9">#-0x10</span>]!</div>
<div class="t" style="right:651px;top:189.8px;font-size:14px;color:#a6bac0;font-weight:bold;font-family:'Liberation Sans',sans-serif;letter-spacing:0px;">6</div>
<div class="t" style="left:480px;top:189.8px;font-size:17.3px;color:#d5dfe1;font-weight:normal;font-family:'Liberation Mono',monospace;letter-spacing:0px;white-space:pre;-webkit-text-stroke:0.35px currentColor">    <span style="color:#e26565">0x185ff38f0</span> &lt;+16&gt;: mov    x29, sp</div>
<div class="t" style="right:651px;top:209.4px;font-size:14px;color:#a6bac0;font-weight:bold;font-family:'Liberation Sans',sans-serif;letter-spacing:0px;">7</div>
<div class="t" style="left:480px;top:209.4px;font-size:17.3px;color:#d5dfe1;font-weight:normal;font-family:'Liberation Mono',monospace;letter-spacing:0px;white-space:pre;-webkit-text-stroke:0.35px currentColor">    <span style="color:#e26565">0x185ff38f4</span> &lt;+20&gt;: bl     <span style="color:#e26565">0x185fd67d0</span>               ; cerror_nocancel</div>
<div class="t" style="right:651px;top:229.0px;font-size:14px;color:#a6bac0;font-weight:bold;font-family:'Liberation Sans',sans-serif;letter-spacing:0px;">8</div>
<div class="t" style="left:480px;top:229.0px;font-size:17.3px;color:#d5dfe1;font-weight:normal;font-family:'Liberation Mono',monospace;letter-spacing:0px;white-space:pre;-webkit-text-stroke:0.35px currentColor">    <span style="color:#e26565">0x185ff38f8</span> &lt;+24&gt;: mov    sp, x29</div>
<div class="t" style="right:651px;top:248.6px;font-size:14px;color:#a6bac0;font-weight:bold;font-family:'Liberation Sans',sans-serif;letter-spacing:0px;">9</div>
<div class="t" style="left:480px;top:248.6px;font-size:17.3px;color:#d5dfe1;font-weight:normal;font-family:'Liberation Mono',monospace;letter-spacing:0px;white-space:pre;-webkit-text-stroke:0.35px currentColor">    <span style="color:#e26565">0x185ff38fc</span> &lt;+28&gt;: ldp    x29, x30, [sp], <span style="color:#8aa3a9">#0x10</span></div>
<div class="t" style="right:651px;top:268.2px;font-size:14px;color:#a6bac0;font-weight:bold;font-family:'Liberation Sans',sans-serif;letter-spacing:0px;">10</div>
<div class="t" style="left:480px;top:268.2px;font-size:17.3px;color:#d5dfe1;font-weight:normal;font-family:'Liberation Mono',monospace;letter-spacing:0px;white-space:pre;-webkit-text-stroke:0.35px currentColor">    <span style="color:#e26565">0x185ff3900</span> &lt;+32&gt;: ret</div>
<div class="t" style="right:651px;top:287.8px;font-size:14px;color:#a6bac0;font-weight:bold;font-family:'Liberation Sans',sans-serif;letter-spacing:0px;">11</div>
<div class="t" style="left:480px;top:287.8px;font-size:17.3px;color:#d5dfe1;font-weight:normal;font-family:'Liberation Mono',monospace;letter-spacing:0px;white-space:pre;-webkit-text-stroke:0.35px currentColor"></div>
<svg class="b" style="left:480px;top:150px;" width="22" height="16" viewBox="0 0 22 16"><line x1="1" y1="8" x2="14" y2="8" stroke="#b9d3c9" stroke-width="1.3"/><polyline points="11,3.5 18,8 11,12.5" fill="none" stroke="#b9d3c9" stroke-width="1.3"/></svg>
<div class="b" style="left:432px;top:562px;width:685px;height:42px;background:#f2f2f2;border-top:1px solid #c9c9c9;border-bottom:1px solid #d3d3d3"></div>
<svg class="b" style="left:444px;top:575px;" width="21" height="17" viewBox="0 0 21 17"><rect x="0.6" y="0.6" width="19.8" height="15.8" fill="none" stroke="#4a4a4a" stroke-width="1.2"/><polygon points="6,6 15,6 10.5,11" fill="none" stroke="#4a4a4a" stroke-width="1.2" stroke-linejoin="round"/></svg>
<svg class="b" style="left:488px;top:577px;" width="23" height="14" viewBox="0 0 23 14"><path d="M1,1 H16 L21.5,7 L16,13 H1 Z" fill="none" stroke="#4a4a4a" stroke-width="1.2"/></svg>
<svg class="b" style="left:533px;top:575px;" width="24" height="17" viewBox="0 0 24 17"><rect x="1.1" y="1" width="4.6" height="15" fill="none" stroke="#4a4a4a" stroke-width="1.2"/><path d="M9.5,1 L22,8.5 L9.5,16 Z" fill="none" stroke="#4a4a4a" stroke-width="1.2" stroke-linejoin="round"/></svg>
<div class="b" style="left:511px;top:562px;width:67px;height:43px;border:3px solid #e1332b;border-radius:5px"></div>
<svg class="b" style="left:579px;top:575px;" width="21" height="19" viewBox="0 0 21 19"><polyline points="1,10 8.5,2.5 18.5,11.5" fill="none" stroke="#4a4a4a" stroke-width="1.2"/><polyline points="18.5,6.5 18.5,11.5 13.5,11.5" fill="none" stroke="#4a4a4a" stroke-width="1.2"/><rect x="7" y="14.5" width="3.5" height="3.5" fill="#4a4a4a"/></svg>
<svg class="b" style="left:628px;top:573px;" width="12" height="21" viewBox="0 0 12 21"><line x1="6" y1="1" x2="6" y2="13.5" fill="none" stroke="#4a4a4a" stroke-width="1.2"/><polyline points="2,9.5 6,13.5 10,9.5" fill="none" stroke="#4a4a4a" stroke-width="1.2"/><rect x="4.2" y="16" width="3.6" height="3.6" fill="#4a4a4a"/></svg>
<svg class="b" style="left:671px;top:573px;" width="15" height="21" viewBox="0 0 15 21"><line x1="7.5" y1="3" x2="7.5" y2="12" fill="none" stroke="#4a4a4a" stroke-width="1.2"/><polyline points="3.5,6 7.5,2 11.5,6" fill="none" stroke="#4a4a4a" stroke-width="1.2"/><rect x="1.2" y="16" width="12.6" height="3.4" fill="none" stroke="#4a4a4a" stroke-width="1.2"/></svg>
<div class="b" style="left:700.5px;top:571.5px;width:1px;height:24px;background:#c4c4c4"></div>
<svg class="b" style="left:713px;top:574px;" width="22" height="20" viewBox="0 0 22 20"><rect x="6" y="1" width="10" height="18" fill="none" stroke="#4a4a4a" stroke-width="1.2"/><rect x="1.5" y="5" width="4.5" height="10" fill="none" stroke="#4a4a4a" stroke-width="1.2"/><rect x="16" y="5" width="4.5" height="10" fill="none" stroke="#4a4a4a" stroke-width="1.2"/></svg>
<svg class="b" style="left:757px;top:573px;" width="24" height="22" viewBox="0 0 24 22"><circle cx="5" cy="5" r="3.6" fill="none" stroke="#4a4a4a" stroke-width="1.2"/><circle cx="5" cy="17" r="3.6" fill="none" stroke="#4a4a4a" stroke-width="1.2"/><circle cx="18.5" cy="11" r="3.6" fill="none" stroke="#4a4a4a" stroke-width="1.2"/><line x1="8" y1="7" x2="15" y2="10" fill="none" stroke="#4a4a4a" stroke-width="1.2"/><line x1="8" y1="15" x2="15" y2="12" fill="none" stroke="#4a4a4a" stroke-width="1.2"/></svg>
<svg class="b" style="left:801px;top:574px;" width="22" height="21" viewBox="0 0 22 21"><path d="M20.5,1 L1.5,10.5 L9.5,11.5 L11,19.5 Z" fill="none" stroke="#4a4a4a" stroke-width="1.2" stroke-linejoin="round"/></svg>
<div class="b" style="left:834.5px;top:571.5px;width:1px;height:24px;background:#c4c4c4"></div>
<svg class="b" style="left:846px;top:572px;" width="22" height="22" viewBox="0 0 22 22"><rect x="0.6" y="0.6" width="20.8" height="20.8" rx="5" fill="#ececec" stroke="#b5b5b5" stroke-width="1.1"/><line x1="5.5" y1="1.5" x2="5.5" y2="20.5" stroke="#bcbcbc" stroke-width="1"/><line x1="1.5" y1="5.5" x2="20.5" y2="5.5" stroke="#bcbcbc" stroke-width="1"/><line x1="11.0" y1="1.5" x2="11.0" y2="20.5" stroke="#bcbcbc" stroke-width="1"/><line x1="1.5" y1="11.0" x2="20.5" y2="11.0" stroke="#bcbcbc" stroke-width="1"/><line x1="16.5" y1="1.5" x2="16.5" y2="20.5" stroke="#bcbcbc" stroke-width="1"/><line x1="1.5" y1="16.5" x2="20.5" y2="16.5" stroke="#bcbcbc" stroke-width="1"/><circle cx="11.0" cy="11.0" r="6.6" fill="none" stroke="#c4c4c4" stroke-width="1"/><line x1="3" y1="3" x2="19" y2="19" stroke="#cdcdcd" stroke-width="0.8"/><line x1="19" y1="3" x2="3" y2="19" stroke="#cdcdcd" stroke-width="0.8"/></svg>
<div class="t" style="left:874.3px;top:575.6px;font-size:15.8px;color:#1e1e1e;font-weight:normal;font-family:'Liberation Sans',sans-serif;letter-spacing:-0.03px;">TPKitDemo</div>
<svg class="b" style="left:960.5px;top:574px;" width="8" height="19" viewBox="0 0 8 19"><polyline points="1,1 7,9.5 1,18" fill="none" stroke="#9a9a9a" stroke-width="1.1"/></svg>
<svg class="b" style="left:974px;top:573.5px;" width="20" height="20" viewBox="0 0 20 20"><circle cx="10.0" cy="10.0" r="9.2" fill="#7fa6d9" stroke="#5a86c2" stroke-width="1.2"/><rect x="5.9" y="4.0" width="1.8" height="12" fill="#fff"/><rect x="9.1" y="4.0" width="1.8" height="12" fill="#fff"/><rect x="12.3" y="4.0" width="1.8" height="12" fill="#fff"/></svg>
<div class="t" style="left:1001.5px;top:575.6px;font-size:15.8px;color:#1e1e1e;font-weight:normal;font-family:'Liberation Sans',sans-serif;letter-spacing:-0.1px;">Thread 1</div>
<svg class="b" style="left:1069.5px;top:574px;" width="8" height="19" viewBox="0 0 8 19"><polyline points="1,1 7,9.5 1,18" fill="none" stroke="#9a9a9a" stroke-width="1.1"/></svg>
<svg class="b" style="left:1083px;top:573.5px;" width="20" height="20" viewBox="0 0 20 20"><rect x="0" y="0" width="20" height="20" fill="#d8ccb2"/><line x1="13.20" y1="10.00" x2="16.20" y2="10.00" stroke="#fbf8f0" stroke-width="2"/><line x1="12.26" y1="12.26" x2="14.38" y2="14.38" stroke="#fbf8f0" stroke-width="2"/><line x1="10.00" y1="13.20" x2="10.00" y2="16.20" stroke="#fbf8f0" stroke-width="2"/><line x1="7.74" y1="12.26" x2="5.62" y2="14.38" stroke="#fbf8f0" stroke-width="2"/><line x1="6.80" y1="10.00" x2="3.80" y2="10.00" stroke="#fbf8f0" stroke-width="2"/><line x1="7.74" y1="7.74" x2="5.62" y2="5.62" stroke="#fbf8f0" stroke-width="2"/><line x1="10.00" y1="6.80" x2="10.00" y2="3.80" stroke="#fbf8f0" stroke-width="2"/><line x1="12.26" y1="7.74" x2="14.38" y2="5.62" stroke="#fbf8f0" stroke-width="2"/><circle cx="10.0" cy="10.0" r="4.2" fill="none" stroke="#fbf8f0" stroke-width="1.9"/></svg>
<div class="t" style="left:1110.8px;top:575.6px;font-size:15.8px;color:#1e1e1e;font-weight:normal;font-family:'Liberation Sans',sans-serif;letter-spacing:0px;">0</div>
<div class="b" style="left:432px;top:604px;width:614px;height:412px;background:linear-gradient(#fff 0%,#fff 88%,#f4f4f4 100%)"></div>
<div class="b" style="left:1046px;top:604px;width:1px;height:412px;background:#cdcdcd"></div>
<div class="b" style="left:1047px;top:604px;width:70px;height:376px;background:#013848;border-top:2px solid #032a35"></div>
<div class="b" style="left:1047px;top:980px;width:70px;height:36px;background:linear-gradient(#fbfbfb,#f2f2f2);border-top:1px solid #e0e0e0"></div>
<div class="t" style="left:1055.5px;top:611.2px;font-size:15px;color:#5a97d2;font-weight:bold;font-family:'Liberation Mono',monospace;letter-spacing:-0.3px;">(lldb)</div>
<div class="t" style="left:447px;top:992.0px;font-size:15.5px;color:#222;font-weight:normal;font-family:'Liberation Sans',sans-serif;letter-spacing:-0.05px;">Auto</div>
<svg class="b" style="left:487px;top:993px;" width="10" height="16" viewBox="0 0 10 16"><polyline points="1.5,5.5 5,2 8.5,5.5" fill="none" stroke="#333" stroke-width="1.5"/><polyline points="1.5,10.5 5,14 8.5,10.5" fill="none" stroke="#333" stroke-width="1.5"/></svg>
<div class="b" style="left:506px;top:991px;width:1.2px;height:17px;background:#c8c8c8"></div>
<svg class="b" style="left:514px;top:992px;" width="23" height="14" viewBox="0 0 23 14"><path d="M1.5,7 Q11.5,-3.5 21.5,7 Q11.5,17.5 1.5,7 Z" fill="none" stroke="#bdbdbd" stroke-width="1.3"/><circle cx="11.5" cy="7" r="3" fill="none" stroke="#bdbdbd" stroke-width="1.6"/></svg>
<svg class="b" style="left:545px;top:990px;" width="20" height="19" viewBox="0 0 20 19"><circle cx="10" cy="9.5" r="8.6" fill="none" stroke="#bdbdbd" stroke-width="1.2"/><line x1="10" y1="7.5" x2="10" y2="14" stroke="#bdbdbd" stroke-width="1.4"/><circle cx="10" cy="5" r="0.9" fill="#bdbdbd"/></svg>
<div class="b" style="left:797px;top:986px;width:242px;height:29px;background:linear-gradient(#fafafa,#f3f3f3);border:1px solid #c9c9c9;border-radius:5px"></div>
<svg class="b" style="left:803px;top:991px;" width="19" height="19" viewBox="0 0 19 19"><circle cx="9.5" cy="9.5" r="8.3" fill="none" stroke="#666" stroke-width="1.2"/><line x1="5" y1="6.8" x2="14" y2="6.8" stroke="#666" stroke-width="1.2"/><line x1="6.3" y1="9.8" x2="12.7" y2="9.8" stroke="#666" stroke-width="1.2"/><line x1="8" y1="12.8" x2="11" y2="12.8" stroke="#666" stroke-width="1.2"/></svg>
<div class="t" style="left:827px;top:992.0px;font-size:15.5px;color:#b8b8b8;font-weight:normal;font-family:'Liberation Sans',sans-serif;letter-spacing:0.1px;">Filter</div>
<div class="t" style="left:1062px;top:991.9px;font-size:15.5px;color:#222;font-weight:normal;font-family:'Liberation Sans',sans-serif;letter-spacing:0.1px;">All Output</div>
</body></html>
